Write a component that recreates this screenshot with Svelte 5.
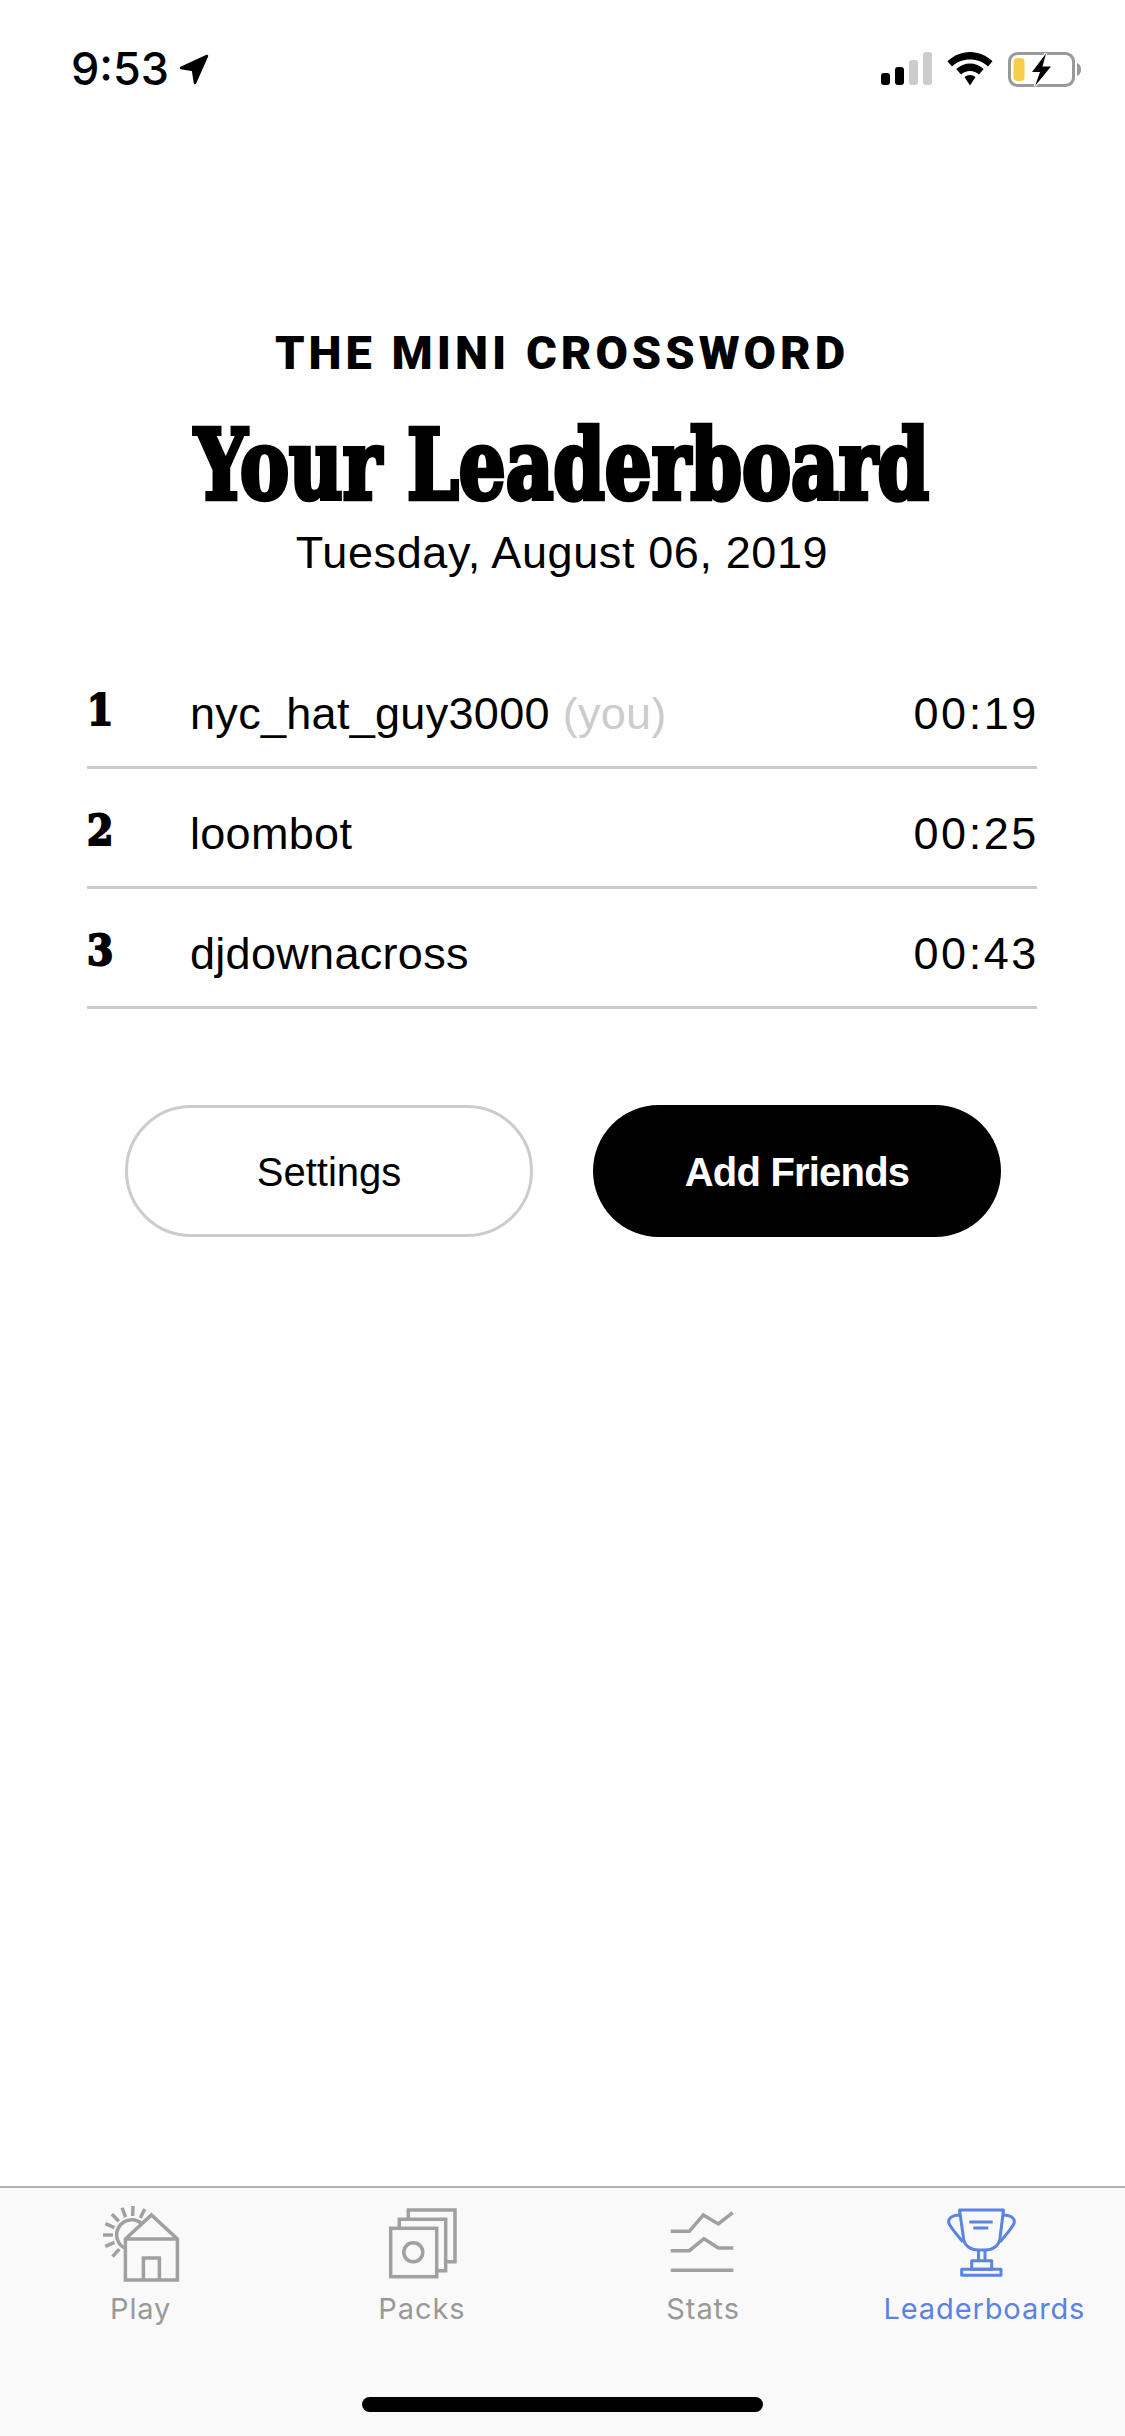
<script>
  const scores = [
    { rank: 1, name: 'nyc_hat_guy3000', you: true, time: '00:19' },
    { rank: 2, name: 'loombot', you: false, time: '00:25' },
    { rank: 3, name: 'djdownacross', you: false, time: '00:43' }
  ];

  // sun rays on the Play icon, degrees measured from the left, going clockwise
  const rayAngles = [-48, -23, 0, 23, 46, 70, 92, 116];
  const rays = rayAngles.map((a) => {
    const r = (a * Math.PI) / 180;
    return {
      x1: 51 - 19 * Math.cos(r),
      y1: 35 - 19 * Math.sin(r),
      x2: 51 - 29 * Math.cos(r),
      y2: 35 - 29 * Math.sin(r)
    };
  });
</script>

<div class="phone">
  <header class="status">
    <div class="clock">
      <span class="time">9:53</span>
      <svg class="arrow" width="32" height="32" viewBox="0 0 32 32">
        <path d="M3 15 L29 3 L17 30 L15 17 Z" fill="#000" stroke="#000" stroke-width="2.5" stroke-linejoin="round" />
      </svg>
    </div>
    <div class="indicators">
      <div class="signal">
        <span class="bar b1"></span>
        <span class="bar b2"></span>
        <span class="bar b3"></span>
        <span class="bar b4"></span>
      </div>
      <svg class="wifi" width="46" height="34" viewBox="0 0 46 34">
        <path d="M23 0 C14.500 0 6.500 3.500 0.500 9.300 L5 14.500 C9.700 10 16 7.500 23 7.500 C30 7.500 36.300 10 41 14.500 L45.500 9.300 C39.500 3.500 31.500 0 23 0 Z" fill="#000" />
        <path d="M23 11.500 C18 11.500 13 13.500 9.300 17 L14 22.500 C16.400 20.200 19.500 19 23 19 C26.500 19 29.600 20.200 32 22.500 L36.700 17 C33 13.500 28 11.500 23 11.500 Z" fill="#000" />
        <path d="M23 23 C21 23 19 23.700 17.500 25 L23 33.500 L28.500 25 C27 23.700 25 23 23 23 Z" fill="#000" />
      </svg>
      <svg class="battery" width="74" height="35" viewBox="0 0 74 35">
        <rect x="1.500" y="1.500" width="64" height="32" rx="8" fill="none" stroke="#999" stroke-width="3" />
        <rect x="5.500" y="6" width="11" height="23" rx="4" fill="#f7ce46" />
        <path d="M69 11 C72 12 73 14.500 73 17.500 C73 20.500 72 23 69 24 Z" fill="#999" />
        <path d="M38 1.500 L24 20 H32 L27 34 L43 14.500 H34.500 Z" fill="#000" stroke="#fff" stroke-width="2.500" paint-order="stroke" />
      </svg>
    </div>
  </header>

  <main class="board">
    <div class="kicker">THE MINI CROSSWORD</div>
    <h1 class="title"><span>Your Leaderboard</span></h1>
    <div class="date">Tuesday, August 06, 2019</div>

    <ul class="scores">
      {#each scores as s}
        <li class="row">
          <span class="rank">{s.rank}</span>
          <span class="name">{s.name}{#if s.you}{' '}<span class="you">(you)</span>{/if}</span>
          <span class="score">{s.time}</span>
        </li>
      {/each}
    </ul>

    <div class="actions">
      <button class="btn ghost">Settings</button>
      <button class="btn solid">Add Friends</button>
    </div>
  </main>

  <footer class="tabbar">
    <nav class="tabs">
      <div class="tab">
        <svg width="120" height="90" viewBox="0 0 120 90" fill="none" stroke="currentColor" stroke-width="3.500">
          {#each rays as r}
            <line x1={r.x1} y1={r.y1} x2={r.x2} y2={r.y2} />
          {/each}
          <path d="M61 24 A15 15 0 1 0 44.400 48.500" />
          <path d="M44.400 80 V39 L70.400 15 L96.400 39 V80 Z M44.400 39 H96.400" />
          <path d="M62.400 80 V58 H78.400 V80" />
        </svg>
        <span>Play</span>
      </div>
      <div class="tab">
        <svg width="120" height="90" viewBox="0 0 120 90" fill="none" stroke="currentColor" stroke-width="3.500">
          <rect x="28.700" y="28.300" width="46" height="48.400" />
          <path d="M37.300 28.300 V19.300 H83.700 V70.700 H74.700" />
          <path d="M46.300 19.300 V10 H93 V61.700 H83.700" />
          <circle cx="51.300" cy="52.300" r="9.500" />
        </svg>
        <span>Packs</span>
      </div>
      <div class="tab">
        <svg width="120" height="90" viewBox="0 0 120 90" fill="none" stroke="currentColor" stroke-width="3.500">
          <path d="M27.700 31.300 H46.300 L60.300 15 L75.300 24 L89.700 12.700" />
          <path d="M27.700 50.700 H46.300 L61 38.700 L75.300 48 H90.300" />
          <path d="M27.700 70.300 H90.300" />
        </svg>
        <span>Stats</span>
      </div>
      <div class="tab active">
        <svg width="120" height="90" viewBox="0 0 120 90" fill="none" stroke="currentColor" stroke-width="3" stroke-linejoin="round">
          <path d="M35.500 10 H79.500 L76 38 C75.500 46 68 50 61.500 50 H54.500 C47 50 40 46 39.500 38 Z" />
          <path d="M36 15 C28 15 22.500 19 25.500 24.500 C28 29 33 35 39 42" />
          <path d="M79 15 C87 15 92.500 19 89.500 24.500 C87 29 82 35 76 42" />
          <path d="M45.300 22 H68.700 M49.300 28 H64.300" />
          <path d="M54.500 50 V60.700 M61 50 V60.700" />
          <path d="M47.700 60.700 H67.700 V69.300 H47.700 Z" />
          <path d="M37.700 69.300 H77 V75.300 H37.700 Z" />
        </svg>
        <span>Leaderboards</span>
      </div>
    </nav>
    <div class="home"></div>
  </footer>
</div>

<style>
  :global(body) {
    margin: 0;
    background: #fff;
  }

  .phone {
    width: 1125px;
    height: 2436px;
    display: flex;
    flex-direction: column;
    color: #000;
    font-family: "Liberation Sans", Arial, sans-serif;
    overflow: hidden;
  }

  /* status bar */
  .status {
    height: 120px;
    padding: 0 43px 0 71px;
    box-sizing: border-box;
    display: flex;
    justify-content: space-between;
    align-items: flex-start;
  }

  .clock {
    display: flex;
    align-items: center;
    padding-top: 42px;
  }

  .time {
    font-family: Inter, sans-serif;
    font-weight: 500;
    font-size: 45px;
    line-height: 54px;
  }

  .arrow {
    margin-left: 9px;
    margin-top: -1px;
  }

  .indicators {
    display: flex;
    align-items: flex-start;
    padding-top: 52px;
  }

  .signal {
    display: flex;
    align-items: flex-end;
    gap: 5px;
    height: 33px;
  }

  .bar {
    width: 9px;
    border-radius: 3px;
    background: #000;
  }

  .b1 { height: 12px; }
  .b2 { height: 18px; }
  .b3 { height: 25px; background: #ccc; }
  .b4 { height: 33px; background: #ccc; }

  .wifi {
    margin-left: 15px;
  }

  .battery {
    margin-left: 15px;
  }

  /* main */
  .board {
    flex: 1;
    padding: 0 88px 0 87px;
  }

  .kicker {
    margin-top: 208px;
    font-family: Roboto, sans-serif;
    font-weight: 900;
    font-size: 47px;
    line-height: 50px;
    letter-spacing: 4px;
    text-align: center;
  }

  .title {
    margin: 37px 0 0;
    height: 100px;
    font-family: "DejaVu Serif Condensed", "DejaVu Serif", serif;
    font-weight: 700;
    font-size: 98px;
    line-height: 100px;
    text-align: center;
    white-space: nowrap;
  }

  .title span {
    display: inline-block;
    transform: scaleX(0.835);
    -webkit-text-stroke: 4.5px #000;
  }

  .date {
    margin-top: 11px;
    font-size: 45px;
    line-height: 54px;
    letter-spacing: 0.6px;
    text-align: center;
  }

  .scores {
    list-style: none;
    margin: 69px 0 0;
    padding: 0;
  }

  .row {
    height: 120px;
    box-sizing: border-box;
    padding-top: 12px;
    border-bottom: 3px solid #ccc;
    display: grid;
    grid-template-columns: 103px 1fr auto;
    align-items: center;
    font-size: 45px;
  }

  .rank {
    font-family: "DejaVu Serif Condensed", "DejaVu Serif", serif;
    font-weight: 700;
    font-size: 42px;
    -webkit-text-stroke: 2px #000;
    margin-top: -6px;
  }

  .name {
    letter-spacing: 0.3px;
  }

  .you {
    color: #ccc;
  }

  .score {
    letter-spacing: 2.6px;
    margin-right: -2px;
  }

  .actions {
    margin: 96px 36px 0 38px;
    display: flex;
    justify-content: space-between;
  }

  .btn {
    width: 408px;
    height: 132px;
    border-radius: 66px;
    font-family: "Liberation Sans", Arial, sans-serif;
    font-size: 40px;
    box-sizing: border-box;
    padding: 2px 0 0;
    color: #000;
    background: #fff;
  }

  .ghost {
    border: 3px solid #ccc;
  }

  .solid {
    border: 0;
    background: #000;
    color: #fff;
    font-weight: 700;
    letter-spacing: -0.8px;
  }

  /* tab bar */
  .tabbar {
    height: 250px;
    box-sizing: border-box;
    background: #f9f9f9;
    border-top: 2px solid #b2b2b2;
    padding-top: 12px;
    display: flex;
    flex-direction: column;
    align-items: center;
  }

  .tabs {
    width: 100%;
    display: flex;
  }

  .tab {
    flex: 1;
    display: flex;
    flex-direction: column;
    align-items: center;
    color: #a0a0a0;
    font-family: Inter, sans-serif;
    font-size: 29px;
    line-height: 36px;
    letter-spacing: 0.9px;
  }

  .tab span {
    color: #999;
    margin-top: 1px;
  }

  .tab.active,
  .tab.active span {
    color: #5a83e2;
  }

  .home {
    margin-top: 70px;
    width: 401px;
    height: 15px;
    border-radius: 8px;
    background: #000;
  }
</style>
